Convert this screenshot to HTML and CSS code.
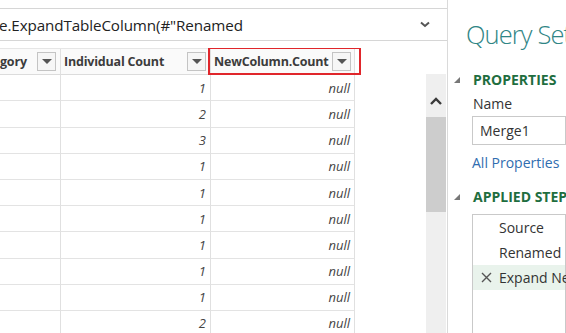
FILE: index.html
```html
<!DOCTYPE html>
<html lang="en">
<head>
    <meta charset="UTF-8">
    <title>Query Editor</title>
    <link rel="stylesheet" href="styles.css">
</head>
<body>
    <div class="window">
        <div class="editor">
            <div class="formula-bar">
                <span class="formula-text">e.ExpandTableColumn(#"Renamed</span>
                <svg class="formula-chevron" width="10" height="7" viewBox="0 0 10 7">
                    <path d="M1 1.5 L5 5 L9 1.5" fill="none" stroke="#555" stroke-width="2"/>
                </svg>
            </div>

            <div class="grid-area">
                <div class="grid">
                    <div class="head-cell">
                        <span class="head-label head-cut">gory</span>
                        <span class="filter-btn"></span>
                    </div>
                    <div class="head-cell">
                        <span class="head-label">Individual Count</span>
                        <span class="filter-btn"></span>
                    </div>
                    <div class="head-cell head-selected">
                        <span class="head-label">NewColumn.Count</span>
                        <span class="filter-btn"></span>
                    </div>

                    <div class="cell"></div><div class="cell num">1</div><div class="cell num">null</div>
                    <div class="cell"></div><div class="cell num">2</div><div class="cell num">null</div>
                    <div class="cell"></div><div class="cell num">3</div><div class="cell num">null</div>
                    <div class="cell"></div><div class="cell num">1</div><div class="cell num">null</div>
                    <div class="cell"></div><div class="cell num">1</div><div class="cell num">null</div>
                    <div class="cell"></div><div class="cell num">1</div><div class="cell num">null</div>
                    <div class="cell"></div><div class="cell num">1</div><div class="cell num">null</div>
                    <div class="cell"></div><div class="cell num">1</div><div class="cell num">null</div>
                    <div class="cell"></div><div class="cell num">1</div><div class="cell num">null</div>
                    <div class="cell"></div><div class="cell num">2</div><div class="cell num">null</div>
                </div>

                <div class="scrollbar">
                    <div class="scroll-up">
                        <svg width="12" height="8" viewBox="0 0 12 8">
                            <path d="M1 7 L6 2 L11 7" fill="none" stroke="#3a3a3a" stroke-width="2.4"/>
                        </svg>
                    </div>
                    <div class="scroll-thumb"></div>
                </div>
            </div>
        </div>

        <div class="settings">
            <h1 class="settings-title">Query Settings</h1>

            <div class="section-head">
                <span class="collapse-tri"></span>
                <span>PROPERTIES</span>
            </div>
            <div class="field-label">Name</div>
            <div class="text-input">Merge1</div>
            <a class="link">All Properties</a>

            <div class="section-head section-steps">
                <span class="collapse-tri"></span>
                <span>APPLIED STEPS</span>
            </div>
            <div class="steps">
                <div class="step">Source</div>
                <div class="step">Renamed</div>
                <div class="step step-active">
                    <svg class="step-x" width="11" height="11" viewBox="0 0 11 11">
                        <path d="M1 1 L10 10 M10 1 L1 10" stroke="#555" stroke-width="1.4"/>
                    </svg>
                    <span>Expand NewColumn</span>
                </div>
            </div>
        </div>
    </div>
</body>
</html>
```

FILE: styles.css
```css
* {
    margin: 0;
    padding: 0;
    box-sizing: border-box;
}

body {
    font-family: 'Open Sans', 'Noto Sans', sans-serif;
    background: #fff;
    color: #333;
    width: 566px;
    height: 333px;
    overflow: hidden;
}

.window {
    display: flex;
    height: 333px;
}

/* left side: formula bar + data grid */
.editor {
    width: 448px;
    flex-shrink: 0;
    border-right: 1px solid #dadada;
    display: flex;
    flex-direction: column;
}

.formula-bar {
    margin-top: 8px;
    height: 33px;
    border-top: 1px solid #d6d6d6;
    border-bottom: 1px solid #d6d6d6;
    display: flex;
    align-items: center;
    justify-content: space-between;
    padding-right: 17px;
}

.formula-text {
    font-family: 'Open Sans', sans-serif;
    font-size: 15.2px;
    color: #222;
    letter-spacing: -0.1px;
    margin-left: -1px;
    white-space: nowrap;
}

.grid-area {
    margin-top: 7px;
    flex: 1;
    display: flex;
    justify-content: space-between;
    overflow: hidden;
}

.grid {
    display: grid;
    grid-template-columns: 61px 150px 144px;
    grid-auto-rows: 26.2px;
    align-content: start;
    border-top: 1px solid #e6e6e6;
}

.head-cell {
    height: 26px;
    display: flex;
    align-items: center;
    justify-content: space-between;
    padding: 0 4px 0 3px;
    border-right: 1px solid #e0e0e0;
    border-bottom: 1px solid #dcdcdc;
    background: #fafafa;
    position: relative;
}

.head-label {
    font-size: 12.5px;
    font-weight: 700;
    color: #3c3c3c;
    letter-spacing: -0.2px;
    white-space: nowrap;
}

.head-cut {
    margin-left: -3px;
}

.filter-btn {
    width: 19px;
    height: 19px;
    border: 1px solid #c4c4c4;
    background: #f6f6f6;
    position: relative;
    flex-shrink: 0;
}

.filter-btn::after {
    content: "";
    position: absolute;
    left: 4px;
    top: 6px;
    border-left: 5px solid transparent;
    border-right: 5px solid transparent;
    border-top: 5px solid #555;
}

.head-selected {
    padding-right: 3px;
}

.head-selected::before {
    content: "";
    position: absolute;
    left: -3px;
    right: -7px;
    top: -2px;
    bottom: -1px;
    border: 2px solid #e0262b;
}

.cell {
    border-right: 1px solid #e0e0e0;
    border-bottom: 1px solid #e3e3e3;
}

.num {
    font-size: 13px;
    font-style: italic;
    color: #444;
    text-align: right;
    padding-right: 4px;
    display: flex;
    align-items: center;
    justify-content: flex-end;
}

.scrollbar {
    width: 20px;
    margin-top: 26px;
    margin-right: 1px;
    background: #efefef;
    display: flex;
    flex-direction: column;
    align-items: center;
}

.scroll-up {
    height: 43px;
    display: flex;
    align-items: center;
    padding-top: 10px;
}

.scroll-thumb {
    width: 20px;
    height: 95px;
    background: #cdcdcd;
}

/* right side: query settings */
.settings {
    flex: 1;
    padding-left: 6px;
    white-space: nowrap;
    overflow: hidden;
}

.settings-title {
    font-size: 25.5px;
    font-weight: 300;
    color: #2f8585;
    margin: 16px 0 0 12px;
    line-height: 36px;
    letter-spacing: -0.9px;
}

.section-head {
    display: flex;
    align-items: center;
    font-size: 14px;
    font-weight: 700;
    color: #1f6e3f;
    margin-top: 17px;
    height: 20px;
}

.section-steps {
    margin-top: 13px;
}

.collapse-tri {
    width: 0;
    height: 0;
    border-left: 6px solid transparent;
    border-bottom: 6px solid #777;
    margin: 2px 13px 0 0;
}

.field-label {
    font-size: 14px;
    color: #333;
    margin: 5px 0 0 19px;
    line-height: 20px;
}

.text-input {
    margin: 2px 0 0 18px;
    height: 29px;
    border: 1px solid #c9c9c9;
    font-size: 14px;
    color: #333;
    padding-left: 7px;
    line-height: 27px;
}

.link {
    display: block;
    font-size: 14px;
    color: #2f6db0;
    margin: 8px 0 0 18px;
    line-height: 20px;
}

.steps {
    margin: 8px 0 0 18px;
    height: 140px;
    border: 1px solid #c9c9c9;
}

.step {
    height: 25px;
    font-size: 14px;
    color: #333;
    padding-left: 26px;
    line-height: 25px;
    display: flex;
    align-items: center;
}

.step-active {
    background: #e9f3ec;
    padding-left: 8px;
}

.step-x {
    margin-right: 7px;
    flex-shrink: 0;
}
```
